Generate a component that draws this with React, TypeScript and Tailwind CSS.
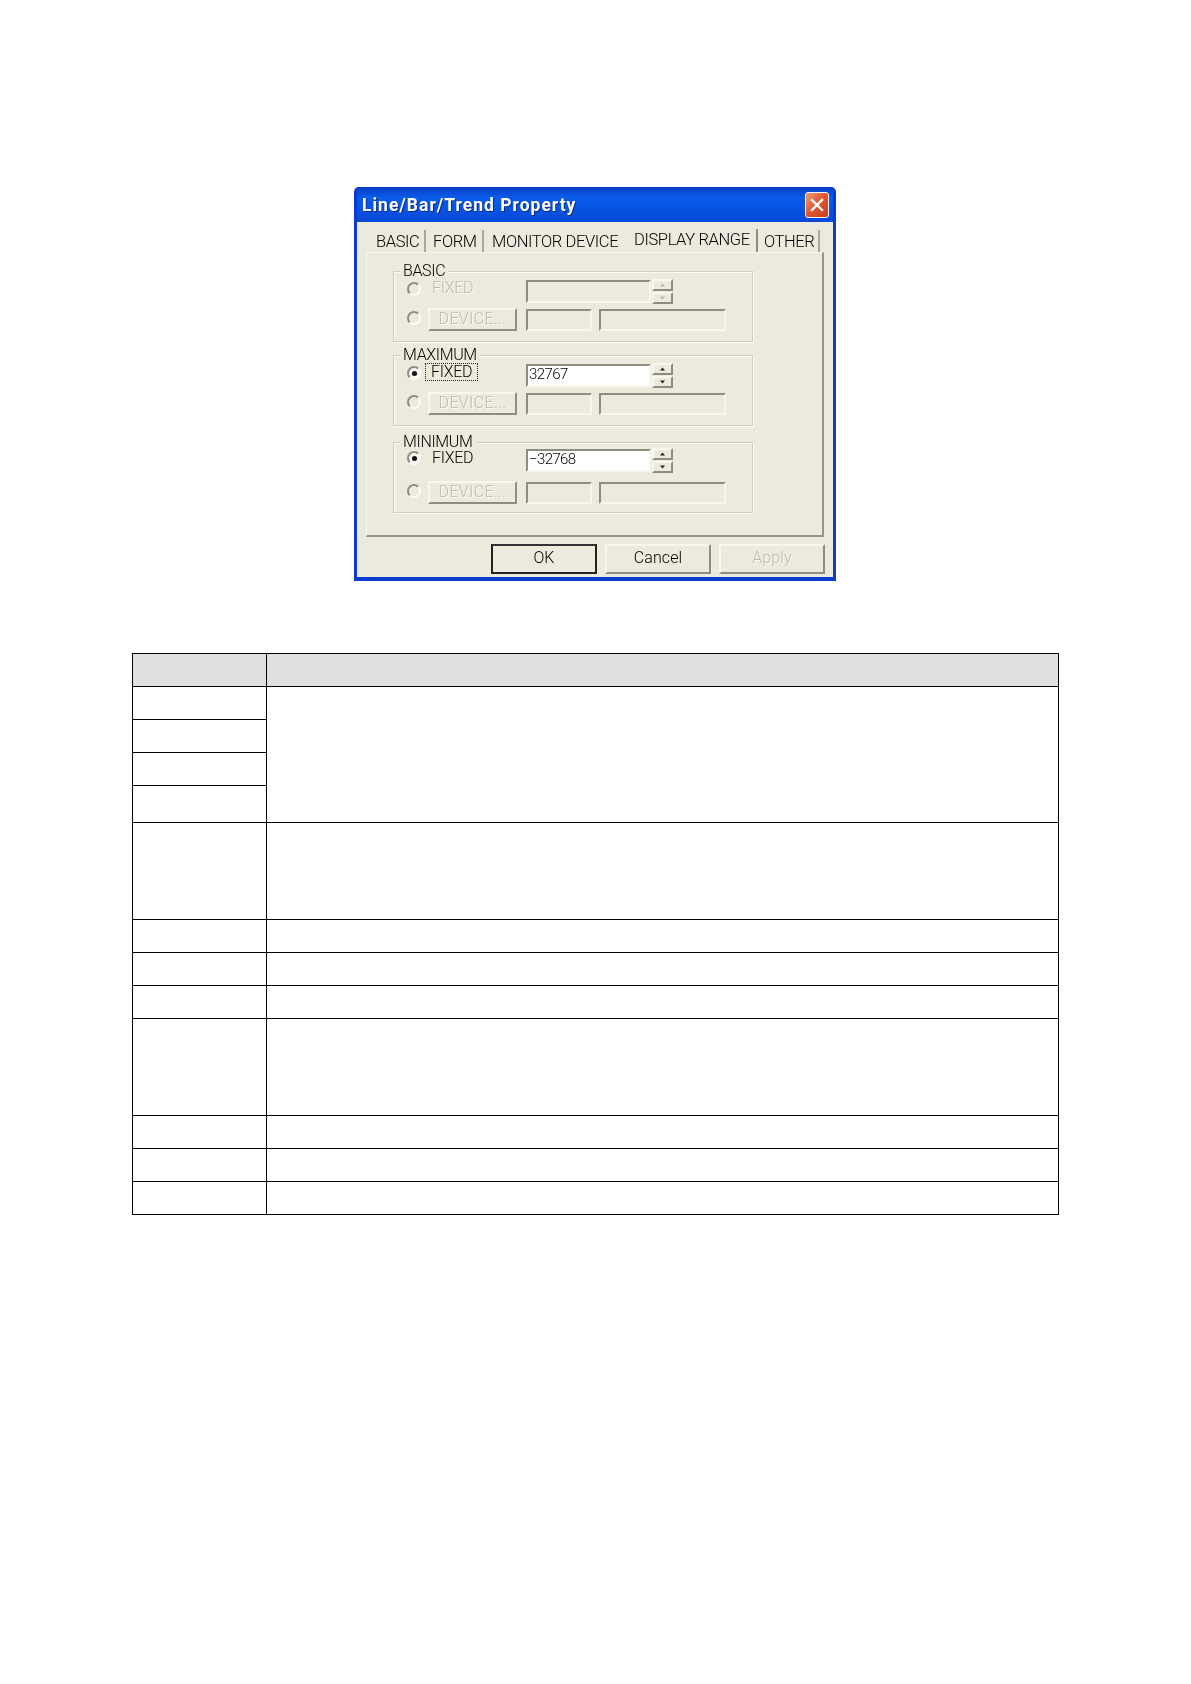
import React from "react";

const font = "font-['Roboto',sans-serif]";
const sunken = "border-2 border-t-[#8f8d80] border-l-[#8f8d80] border-r-[#f7f6ef] border-b-[#f7f6ef]";
const raised = "border-2 border-t-[#f7f6ef] border-l-[#f7f6ef] border-r-[#8f8d80] border-b-[#8f8d80]";
const disabledText = "text-[#bdbbab] [text-shadow:1px_1px_0_#fbfaf5]";

function Radio({ checked, disabled }: { checked?: boolean; disabled?: boolean }) {
  return (
    <span className={`flex h-[14px] w-[14px] shrink-0 -translate-y-[2px] items-center justify-center rounded-full border-2 border-t-[#8f8d80] border-l-[#8f8d80] border-r-[#fbfaf5] border-b-[#fbfaf5] ${disabled ? "bg-[#eceadc]" : "bg-[#f7f6f0]"}`}>
      {checked && <span className="h-[5px] w-[5px] rounded-full bg-[#111]" />}
    </span>
  );
}

function Tri({ down, disabled }: { down?: boolean; disabled?: boolean }) {
  return (
    <svg width="7" height="4" viewBox="0 0 7 4">
      <path d={down ? "M1 0.5H6L3.5 3.5Z" : "M3.5 0.5L6 3.5H1Z"} fill={disabled ? "#b9b7a8" : "#222"} />
    </svg>
  );
}

function Spinner({ disabled }: { disabled?: boolean }) {
  return (
    <div className="ml-[1px] flex w-[21px] flex-col gap-[1px]">
      <div className={`flex h-[12px] items-center justify-center ${raised}`}><Tri disabled={disabled} /></div>
      <div className={`flex h-[12px] items-center justify-center ${raised}`}><Tri down disabled={disabled} /></div>
    </div>
  );
}

function DeviceRow({ className }: { className: string }) {
  return (
    <div className={`flex h-[23px] items-center ${className}`}>
      <div className="ml-[13px]"><Radio disabled /></div>
      <div className={`ml-[7px] flex h-[23px] w-[89px] items-center justify-center ${raised} text-[16px] font-light tracking-[0.35px] ${disabledText}`}>
        <span className="-translate-y-[1px]">DEVICE...</span>
      </div>
      <div className={`ml-[9px] h-[22px] w-[66px] ${sunken}`} />
      <div className={`ml-[7px] h-[22px] w-[127px] ${sunken}`} />
    </div>
  );
}

function Group({ title, value, disabled, focus, top, rowTop, rowGap, fixedY }: { title: string; value?: string; disabled?: boolean; focus?: boolean; top: string; rowTop: string; rowGap: string; fixedY: string }) {
  return (
    <div className={`relative h-[71px] w-[360px] border border-[#cfcdbc] shadow-[1px_1px_0_#fbfaf5,inset_1px_1px_0_#fbfaf5] ${top} ${rowTop}`}>
      <span className="absolute -top-[8px] left-[6px] bg-[#eceadc] px-[3px] text-[16px] font-light leading-[14px] tracking-[-0.35px] text-black">{title}</span>
      <div className="flex h-[22px] items-center">
        <div className="ml-[13px]"><Radio checked={!disabled} disabled={disabled} /></div>
        <div className="ml-[11px] w-[94px]">
          <span className={`inline-block text-[16px] font-light leading-[14px] tracking-[-0.3px] ${disabled ? disabledText : "text-black"} ${focus ? "-ml-[7px] border border-dotted border-[#222] px-[5px] py-[1px]" : ""} ${fixedY}`}>FIXED</span>
        </div>
        <div className={`flex h-[23px] w-[125px] items-center pl-[1px] text-[15px] font-light tracking-[-0.6px] text-black ${sunken} ${disabled ? "" : "bg-white"}`}>
          <span className="-translate-y-[1px]">{value}</span>
        </div>
        <Spinner disabled={disabled} />
      </div>
      <DeviceRow className={rowGap} />
    </div>
  );
}

function Tab({ label, active, className }: { label: string; active?: boolean; className: string }) {
  return (
    <div className={`flex items-center ${className}`}>
      <span className={`${active ? "" : "translate-y-[1px]"} whitespace-nowrap text-[16.5px] font-light tracking-[-0.38px] text-black`}>{label}</span>
    </div>
  );
}

function Btn({ label, def, disabled }: { label: string; def?: boolean; disabled?: boolean }) {
  return (
    <div className={`flex h-[30px] w-[106px] items-center justify-center text-[16px] font-light tracking-[0.1px] ${def ? "border-2 border-[#222] border-t-[#333]" : raised} ${disabled ? disabledText : "text-black"}`}>
      <span className="-translate-y-[1px]">{label}</span>
    </div>
  );
}

const rows: { h: string; right?: boolean; span?: number }[] = [
  { h: "h-[33px]", span: 4 },
  { h: "h-[33px]" },
  { h: "h-[33px]" },
  { h: "h-[37px]" },
  { h: "h-[97px]", right: true },
  { h: "h-[33px]", right: true },
  { h: "h-[33px]", right: true },
  { h: "h-[33px]", right: true },
  { h: "h-[97px]", right: true },
  { h: "h-[33px]", right: true },
  { h: "h-[33px]", right: true },
  { h: "h-[33px]", right: true },
];

export default function App() {
  return (
    <div className={`min-h-[1684px] bg-white pt-[187px] ${font}`}>
      <div className="ml-[354px] h-[394px] w-[482px] overflow-hidden rounded-t-[5px] bg-[#0a3ccf] px-[3px] pb-[4px] blur-[0.3px]">
        <div className="flex h-[35px] items-center justify-between bg-gradient-to-b from-[#0a3cc4] via-[#0a5ceb] via-30% to-[#0748d8] pr-[4px] pl-[5px]">
          <span className="translate-y-[1px] text-[17.5px] font-bold tracking-[1px] text-white [text-shadow:1px_1px_0_#0a2a90]">Line/Bar/Trend Property</span>
          <span className="flex h-[26px] w-[24px] items-center justify-center rounded-[3px] border border-[#f5f5f5] bg-gradient-to-br from-[#ef9a76] via-[#e0532c] to-[#c8401f]">
            <svg width="14" height="14" viewBox="0 0 14 14"><path d="M2 2L12 12M12 2L2 12" stroke="#fff" strokeWidth="2.4" strokeLinecap="square" /></svg>
          </span>
        </div>
        <div className="h-[355px] bg-[#eceadc] px-[9px] pt-[3px]">
          <div className="flex h-[27px] w-[458px] pl-[10px]">
            <Tab label="BASIC" className="mt-[5px] w-[50px] border-r-2 border-[#a9a797]" />
            <Tab label="FORM" className="mt-[5px] w-[58px] border-r-2 border-[#a9a797] pl-[7px]" />
            <Tab label="MONITOR DEVICE" className="mt-[5px] w-[142px] pl-[8px]" />
            <Tab label="DISPLAY RANGE" active className="mt-[4px] w-[132px] border-r-2 border-[#8f8d80] pl-[8px]" />
            <Tab label="OTHER" className="mt-[5px] w-[62px] border-r-2 border-[#a9a797] pl-[6px]" />
          </div>
          <div className="h-[285px] w-[458px] border-t border-l border-t-[#f7f6ef] border-l-[#f7f6ef] border-r-2 border-b-2 border-r-[#98968a] border-b-[#98968a] pl-[26px] pt-[18px]">
            <Group title="BASIC" disabled top="" rowTop="pt-[8px]" rowGap="mt-[6px]" fixedY="-translate-y-[3px]" />
            <Group title="MAXIMUM" value="32767" focus top="mt-[13px]" rowTop="pt-[8px]" rowGap="mt-[6px]" fixedY="-translate-y-[3px]" />
            <Group title="MINIMUM" value="−32768" top="mt-[16px]" rowTop="pt-[6px]" rowGap="mt-[10px]" fixedY="-translate-y-[2px]" />
          </div>
          <div className="mt-[7px] flex w-[459px] justify-end gap-[8px]">
            <Btn label="OK" def />
            <Btn label="Cancel" />
            <Btn label="Apply" disabled />
          </div>
        </div>
      </div>

      <table className="mt-[72px] ml-[132px] w-[927px] table-fixed border-collapse border border-black">
        <colgroup>
          <col className="w-[134px]" />
          <col />
        </colgroup>
        <thead>
          <tr className="h-[33px] bg-[#e0e0e0]">
            <th className="border border-black" />
            <th className="border border-black" />
          </tr>
        </thead>
        <tbody>
          {rows.map((r, i) => (
            <tr key={i} className={r.h}>
              <td className="border border-black" />
              {r.span && <td rowSpan={r.span} className="border border-black" />}
              {r.right && <td className="border border-black" />}
            </tr>
          ))}
        </tbody>
      </table>
    </div>
  );
}
